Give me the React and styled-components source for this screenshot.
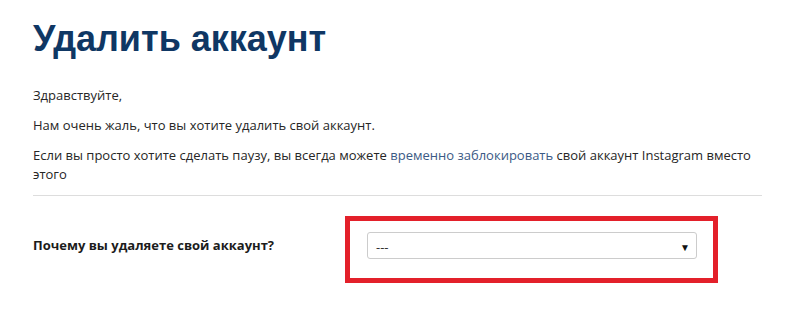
import React from 'react';
import styled, { createGlobalStyle } from 'styled-components';

const GlobalStyle = createGlobalStyle`
  html, body {
    margin: 0;
    padding: 0;
    background: #ffffff;
  }
`;

const Page = styled.div`
  width: 800px;
  height: 330px;
  box-sizing: border-box;
  padding: 14px 38px 0 33px;
  font-family: "Open Sans", "Noto Sans", sans-serif;
  color: #262626;
`;

const Title = styled.h1`
  margin: 0 0 22px;
  font-family: "Liberation Sans", Arial, sans-serif;
  font-size: 36px;
  line-height: 50px;
  font-weight: 700;
  color: #0f3764;
`;

const Text = styled.p`
  margin: 0 0 11px;
  font-size: 13px;
  line-height: 19px;
`;

const Link = styled.a`
  color: #3b5a85;
  text-decoration: none;
`;

const Divider = styled.hr`
  margin: 6px 0 0;
  border: 0;
  border-top: 1px solid #dddddd;
`;

const FormRow = styled.div`
  display: flex;
  align-items: flex-start;
  margin-top: 20px;
`;

const Label = styled.label`
  width: 312px;
  margin-top: 20px;
  font-size: 13px;
  line-height: 18px;
  font-weight: 700;
  color: #1c1c1c;
`;

const Highlight = styled.div`
  border: 5px solid #e3202a;
  padding: 11px 16px 19px 17px;
  width: 330px;
`;

const SelectBox = styled.div`
  height: 27px;
  box-sizing: border-box;
  border: 1px solid #cccccc;
  border-radius: 3px;
  display: flex;
  align-items: center;
  padding: 2px 6px 0 8px;
  font-size: 13px;
  color: #333333;
`;

const Arrow = styled.span`
  margin-left: auto;
  font-size: 10px;
  color: #111111;
`;

export default function App() {
  return (
    <>
      <GlobalStyle />
      <Page>
        <Title>Удалить аккаунт</Title>
        <Text>Здравствуйте,</Text>
        <Text>Нам очень жаль, что вы хотите удалить свой аккаунт.</Text>
        <Text>
          Если вы просто хотите сделать паузу, вы всегда можете{' '}
          <Link href="#">временно заблокировать</Link> свой аккаунт Instagram вместо этого
        </Text>
        <Divider />
        <FormRow>
          <Label>Почему вы удаляете свой аккаунт?</Label>
          <Highlight>
            <SelectBox>
              <span>---</span>
              <Arrow>▼</Arrow>
            </SelectBox>
          </Highlight>
        </FormRow>
      </Page>
    </>
  );
}
